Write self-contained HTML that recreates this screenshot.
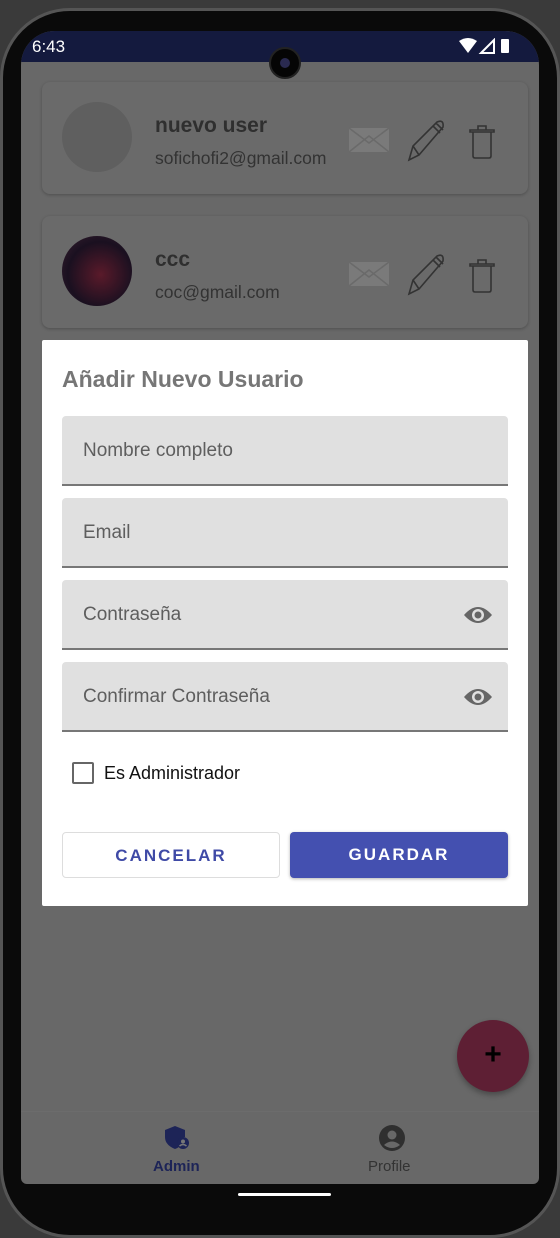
<!DOCTYPE html>
<html><head><meta charset="utf-8"><style>
*{margin:0;padding:0;box-sizing:border-box}
body{width:560px;height:1208px;background:#3a3a3a;position:relative;overflow:hidden;font-family:"Liberation Sans",Roboto,sans-serif}
.frame{position:absolute;left:0;top:8px;width:560px;height:1230px;border-radius:70px;background:#0a0a0a;border:3px solid #555}
.screen{position:absolute;left:21px;top:31px;width:518px;height:1153px;background:#686868;border-radius:34px 34px 6px 6px;overflow:hidden}
.sb{position:absolute;left:0;top:0;width:518px;height:31px;background:#141a3e;color:#fff;font-size:17px}
.cam{position:absolute;left:269px;top:47px;width:32px;height:32px;border-radius:50%;background:#050505;border:2px solid #222}
.cam:after{content:"";position:absolute;left:9px;top:9px;width:10px;height:10px;border-radius:50%;background:#2a2a50}
.card{position:absolute;left:21px;width:486px;height:112px;background:#6a6a6a;border-radius:8px;box-shadow:0 1px 3px rgba(0,0,0,.25)}
.av{position:absolute;left:20px;top:20px;width:70px;height:70px;border-radius:50%;background:#5f5f5f}
.nm{position:absolute;left:113px;font-weight:bold;font-size:21px;color:#2f2f2f}
.em{position:absolute;left:113px;font-size:17.5px;color:#333}
.dlg{position:absolute;left:42px;top:340px;width:486px;height:566px;background:#fff;border-radius:2px}
.ttl{position:absolute;left:20px;top:26px;font-size:23px;font-weight:bold;color:#767676}
.f{position:absolute;left:20px;width:446px;height:70px;background:#e0e0e0;border-bottom:2px solid #777;border-radius:4px 4px 0 0}
.f span{position:absolute;left:21px;top:24px;font-size:19px;color:#5e5e5e}
.f svg{position:absolute;right:15px;top:23px}
.btn{position:absolute;top:492px;height:46px;border-radius:4px;text-align:center;line-height:46px;font-size:17px;letter-spacing:2px;font-weight:bold}
</style></head><body>
<div class="frame"></div>
<div class="screen">
 <div class="sb"><span style="position:absolute;left:11px;top:6px">6:43</span>
  <svg style="position:absolute;right:24px;top:7px" width="56" height="16" viewBox="0 0 56 16"><path d="M0 3Q9-3 18 3L9 15Z" fill="#fff"/><path d="M22 15L35 2V15Z" fill="none" stroke="#fff" stroke-width="2"/><rect x="42" y="1" width="8" height="14" rx="1" fill="#fff"/></svg></div>
 <div class="card" style="top:51px"><div class="av"></div><div class="nm" style="top:32px">nuevo user</div><div class="em" style="top:66px">sofichofi2@gmail.com</div>
  <svg style="position:absolute;left:305px;top:36px" width="160" height="44" viewBox="0 0 160 44"><path d="M2 10H42V34H2Z" fill="#7a7a7a"/><path d="M2 34L22 18L42 34M2 10L22 25L42 10" fill="none" stroke="#6a6a6a" stroke-width="1.5"/><path d="M62 42L66 28L90 4Q97 1 96 9L72 37Z M66 28L72 37 M86 8L93 15 M89 5L96 12" fill="none" stroke="#333" stroke-width="1.6"/><path d="M126 14H144V38Q144 40 142 40H128Q126 40 126 38Z M123 12H147V14H123Z M131 12V8H139V12" fill="none" stroke="#333" stroke-width="1.6"/></svg></div>
 <div class="card" style="top:185px"><div class="av" style="background:radial-gradient(circle at 55% 55%,#5a1a2a,#1a1020 60%,#3a2030)"></div><div class="nm" style="top:32px">ccc</div><div class="em" style="top:66px">coc@gmail.com</div>
  <svg style="position:absolute;left:305px;top:36px" width="160" height="44" viewBox="0 0 160 44"><path d="M2 10H42V34H2Z" fill="#7a7a7a"/><path d="M2 34L22 18L42 34M2 10L22 25L42 10" fill="none" stroke="#6a6a6a" stroke-width="1.5"/><path d="M62 42L66 28L90 4Q97 1 96 9L72 37Z M66 28L72 37 M86 8L93 15 M89 5L96 12" fill="none" stroke="#333" stroke-width="1.6"/><path d="M126 14H144V38Q144 40 142 40H128Q126 40 126 38Z M123 12H147V14H123Z M131 12V8H139V12" fill="none" stroke="#333" stroke-width="1.6"/></svg></div>
 <div style="position:absolute;left:436px;top:989px;width:72px;height:72px;border-radius:50%;background:#5e1f34;box-shadow:0 3px 6px rgba(0,0,0,.3);text-align:center;line-height:70px;font-size:30px;font-weight:bold;color:#000">+</div>
 <div style="position:absolute;left:0;top:1080px;width:518px;height:1px;background:#6c6c6c"></div>
 <svg style="position:absolute;left:143px;top:1094px" width="26" height="26" viewBox="0 0 26 26"><path d="M11 1L1 5V12Q1 20 11 24Q14 23 16 21A6 6 0 0 1 21 12V5Z" fill="#1d2457"/><circle cx="19" cy="18" r="6" fill="#1d2457"/><circle cx="19" cy="16.5" r="2" fill="#777"/><path d="M15.5 21Q19 18 22.5 21" stroke="#777" stroke-width="1.5" fill="none"/></svg>
 <div style="position:absolute;left:132px;top:1127px;font-size:15px;font-weight:bold;color:#1d2457">Admin</div>
 <svg style="position:absolute;left:358px;top:1094px" width="26" height="26" viewBox="0 0 26 26"><circle cx="13" cy="13" r="13" fill="#2f2f2f"/><circle cx="13" cy="10" r="4.5" fill="#686868"/><path d="M5 20Q13 13 21 20Q13 26 5 20Z" fill="#686868"/></svg>
 <div style="position:absolute;left:347px;top:1127px;font-size:15px;color:#333">Profile</div>
</div>
<div class="cam"></div>
<div style="position:absolute;left:238px;top:1193px;width:93px;height:3px;background:#fff;border-radius:2px"></div>
<div class="dlg">
 <div class="ttl">Añadir Nuevo Usuario</div>
 <div class="f" style="top:76px"><span>Nombre completo</span></div>
 <div class="f" style="top:158px"><span>Email</span></div>
 <div class="f" style="top:240px"><span>Contraseña</span><svg width="30" height="24" viewBox="0 0 30 24"><path d="M1 12Q15-4 29 12Q15 28 1 12Z" fill="#666"/><circle cx="15" cy="12" r="6" fill="#e0e0e0"/><circle cx="15" cy="12" r="3.5" fill="#666"/></svg></div>
 <div class="f" style="top:322px"><span>Confirmar Contraseña</span><svg width="30" height="24" viewBox="0 0 30 24"><path d="M1 12Q15-4 29 12Q15 28 1 12Z" fill="#666"/><circle cx="15" cy="12" r="6" fill="#e0e0e0"/><circle cx="15" cy="12" r="3.5" fill="#666"/></svg></div>
 <div style="position:absolute;left:30px;top:422px;width:22px;height:22px;border:2px solid #666;border-radius:2px"></div>
 <div style="position:absolute;left:62px;top:423px;font-size:18px;color:#111">Es Administrador</div>
 <div class="btn" style="left:20px;width:218px;border:1px solid #ddd;color:#3f4aa6;background:#fff">CANCELAR</div>
 <div class="btn" style="left:248px;width:218px;background:#4450b0;color:#fff;box-shadow:0 1px 3px rgba(0,0,0,.3)">GUARDAR</div>
</div>
</body></html>
